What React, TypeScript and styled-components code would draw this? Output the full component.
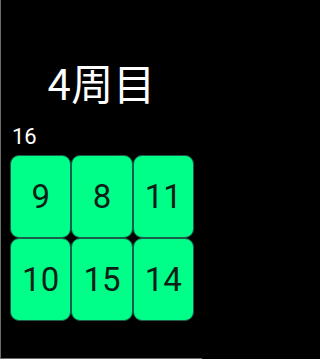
import * as React from 'react';
import styled, { createGlobalStyle } from 'styled-components';

const GlobalStyle = createGlobalStyle`
  html, body {
    margin: 0;
    padding: 0;
    background: #000;
  }
  body {
    font-family: Roboto, "Noto Sans CJK JP", sans-serif;
  }
`

const Screen = styled.div`
  width: 202px;
  height: 359px;
  box-sizing: border-box;
  border-left: 1px solid #6a6a6a;
  border-bottom: 1px solid #6a6a6a;
  background: #000;
  display: flex;
  flex-direction: column;
  overflow: hidden;
`

const Title = styled.h1`
  margin: 56px 0 0 0;
  height: 52px;
  font-family: "Noto Sans CJK JP", sans-serif;
  font-weight: 400;
  font-size: 42px;
  line-height: 52px;
  color: #fff;
  text-align: center;
`

const Counter = styled.div`
  margin: 17px 0 0 11px;
  font-family: Roboto, sans-serif;
  font-size: 22px;
  line-height: 24px;
  color: #fff;
`

const Grid = styled.div`
  margin: 6px 0 0 9px;
  width: 184px;
  display: grid;
  grid-template-columns: repeat(3, 1fr);
  grid-auto-rows: 83px;
`

const Card = styled.div`
  box-sizing: border-box;
  background: #00ff88;
  border: 1px solid #1c5c4c;
  border-radius: 9px;
  display: flex;
  align-items: center;
  justify-content: center;
  font-family: Roboto, sans-serif;
  font-size: 33px;
  color: #0d1f16;
`

const numbers = [9, 8, 11, 10, 15, 14]

export default function App() {
  return (
    <>
      <GlobalStyle />
      <Screen>
        <Title>4周目</Title>
        <Counter>16</Counter>
        <Grid>
          {numbers.map((n) => (
            <Card key={n}>{n}</Card>
          ))}
        </Grid>
      </Screen>
    </>
  )
}
